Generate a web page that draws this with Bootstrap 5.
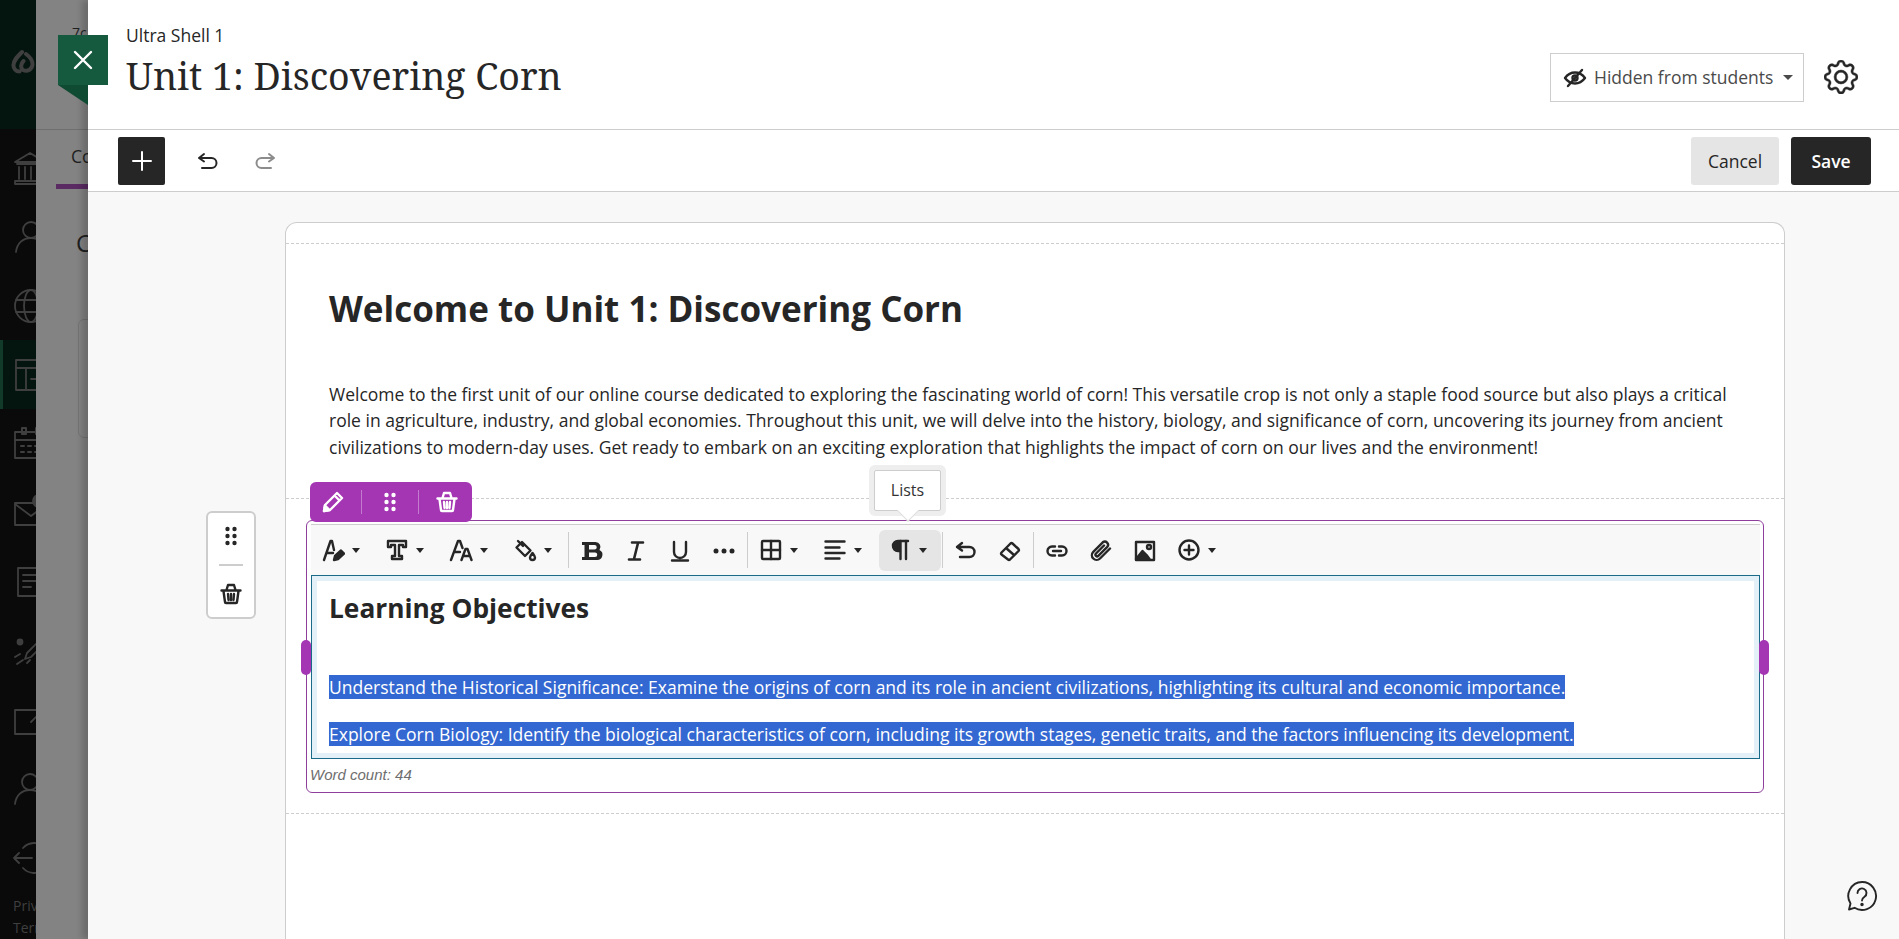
<!DOCTYPE html>
<html lang="en">
<head>
  <meta charset="UTF-8">
  <title>Unit 1: Discovering Corn</title>
  <link href="https://cdn.jsdelivr.net/npm/bootstrap@5.3.0/dist/css/bootstrap.min.css" rel="stylesheet">
  <style>
    html, body { height: 100%; }
    body { overflow: hidden; font-family: "Open Sans", "Noto Sans", sans-serif; color: #262626; background: #838383; }
    svg.ico { width: 24px; height: 24px; fill: none; stroke: currentColor; stroke-width: 2; stroke-linecap: round; stroke-linejoin: round; flex: none; }

    /* page behind the panel, dimmed */
    .base-page { height: 939px; }
    .side-nav { width: 36px; overflow: hidden; background: #0a0a0a; color: #3f3f3f; }
    .nav-top { height: 129px; background: #04140e; padding: 49px 0 0 11px; }
    .nav-top svg { width: 24px; height: 25px; display: block; }
    .nav-list { padding-top: 4px; }
    .nav-item-box { height: 69px; padding-left: 13px; }
    .nav-item-box svg.ico { width: 36px; height: 36px; stroke-width: 1.8; }
    .nav-item-box.is-on { background: #04140e; border-left: 3px solid #123a2a; padding-left: 10px; }
    .nav-legal { font-size: 14px; line-height: 22px; color: #3f3f3f; padding: 3px 0 0 13px; white-space: nowrap; }
    .base-main { flex: 1; color: #1f1f1f; min-width: 0; }
    .base-head { height: 130px; border-bottom: 1px solid #6f6f6f; padding: 22px 0 0 36px; font-size: 14px; }
    .base-tabs { height: 54px; padding: 13px 0 0 35px; font-size: 17.6px; }
    .base-tab-line { height: 5px; width: 100px; margin-left: 20px; background: #5a2a63; }
    .base-title { padding: 36px 0 0 40px; font-size: 24px; }
    .base-card { margin: 58px 0 0 42px; height: 119px; border: 1px solid #747474; border-radius: 6px; }

    /* panel */
    .peek-panel { position: absolute; top: 0; bottom: 0; left: 88px; right: 0; background: #f8f8f8; box-shadow: -6px 0 6px rgba(0,0,0,.18); overflow: hidden; }
    .close-flag { position: absolute; left: 58px; top: 35px; width: 50px; height: 70px; z-index: 5; padding: 0; border: 0; background: none; }
    .close-flag svg { display: block; }
    .panel-head { height: 130px; background: #fff; border-bottom: 1px solid #cdcdcd; padding: 22px 41px 0 38px; }
    .course-name { font-size: 17.5px; line-height: 26px; }
    .unit-title { font-family: "Noto Serif", "DejaVu Serif", "Liberation Serif", serif; font-size: 37.5px; line-height: 48px; font-weight: 400; margin: 4px 0 0; }
    .vis-btn { height: 49px; width: 254px; margin-top: 31px; border: 1px solid #cdcdcd; border-radius: 0; background: #fff; color: #4a4a4a; font-size: 17.5px; padding: 0 10px 0 12px; }
    .vis-btn svg.ico { color: #262626; margin-right: 7px; stroke-width: 2.400; }
    .gear-ico { width: 34px; height: 34px; margin: 38px 0 0 20px; fill: #262626; stroke: #262626; stroke-width: .25; }
    .panel-bar { height: 62px; background: #fff; border-bottom: 1px solid #cdcdcd; padding: 7px 28px 0 30px; }
    .add-btn { width: 47px; height: 48px; background: #262626; color: #fff; border-radius: 2px; padding: 0; border: 0; }
    .hist-btn { width: 24px; height: 24px; margin-left: 31px; padding: 0; border: 0; background: none; color: #262626; }
    .hist-btn.is-off { color: #8c8c8c; margin-left: 33px; }
    .act-btn { height: 48px; border: 0; border-radius: 3px; font-size: 17.5px; padding: 0 15px; }
    .act-cancel { width: 88px; background: #e5e5e5; color: #262626; margin-right: 12px; font-weight: 500; }
    .act-save { width: 80px; background: #262626; color: #fff; font-weight: 600; }

    .doc-sheet { margin: 30px 114px 0 197px; height: 800px; background: #fff; border: 1px solid #cdcdcd; border-bottom: 0; border-radius: 12px 12px 0 0; }
    .sheet-top { height: 21px; border-bottom: 1px dashed #cdcdcd; }
    .text-block { height: 255px; border-bottom: 1px dashed #cdcdcd; padding: 40px 43px 0; }
    .text-block h2 { font-size: 35px; line-height: 50px; font-weight: 700; margin: 0 0 47px; }
    .text-block p { font-size: 17.5px; line-height: 26.4px; margin: 0; }
    .edit-block { height: 315px; border-bottom: 1px dashed #cdcdcd; padding: 21px 20px 21px 20px; }
    .edit-frame { position: relative; height: 273px; border: 1px solid #8e3f9c; border-radius: 6px; padding: 3px 3px 0 4px; }
    .block-tools { position: absolute; left: 3px; top: -39px; width: 162px; height: 40px; background: #a435b3; color: #fff; border-radius: 6px; z-index: 2; gap: 16px; padding-left: 11px; }
    .block-tools svg.ico { stroke-width: 2.4; }
    .block-tools span { width: 1px; height: 24px; background: #c37ccd; }
    .block-tools button { background: none; border: 0; padding: 0; color: inherit; display: flex; }
    .side-grip { position: absolute; left: -101px; top: -10px; width: 50px; height: 108px; background: #fff; border: 2px solid #cdcdcd; border-radius: 6px; }
    .side-grip hr { width: 24px; margin: 16px 0; border-top: 2px solid #cdcdcd; opacity: 1; }
    .side-grip svg.ico { stroke-width: 2.4; }
    .size-knob { position: absolute; top: 119px; width: 10px; height: 35px; background: #a435b3; border-radius: 5px; }
    .knob-l { left: -6px; }
    .knob-r { right: -6px; }
    .rt-bar { height: 51px; background: #f8f8f8; border-top: 1px solid #cdcdcd; }
    .rt-btn { position: relative; height: 41px; border: 0; background: none; padding: 0; color: #262626; border-radius: 6px; }
    .rt-btn svg.ico { stroke-width: 2.4; }
    .rt-icon { width: 44px; }
    .rt-drop { width: 64px; padding-left: 10px; gap: 7px; }
    .rt-drop::after { content: ""; border-top: 5px solid #262626; border-left: 4px solid transparent; border-right: 4px solid transparent; }
    .rt-drop.is-hover { width: 62px; margin: 0 0 0 2px; background: #e5e5e5; padding-left: 9px; }
    .rt-sep { width: 1px; height: 36px; background: #cdcdcd; margin: 0 1px; }
    .lists-tip { position: absolute; left: -5px; top: -60px; width: 67px; height: 41px; background: #fff; border: 1px solid #cdcdcd; border-radius: 2px; box-shadow: 0 0 0 5px #eee; font-size: 16px; color: #333; z-index: 3; }
    .lists-tip::after { content: ""; position: absolute; left: 25px; bottom: -9px; width: 16px; height: 16px; background: #fff; border-right: 1px solid #ddd; border-bottom: 1px solid #ddd; transform: rotate(45deg) scale(.95); }
    .rt-body { height: 184px; border: 1px solid #1a6a8a; box-shadow: inset 0 0 0 5px #e3f0f8; padding: 14px 18px 0 17px; }
    .rt-body h3 { font-size: 26.3px; line-height: 36px; font-weight: 700; margin: 0 0 48px; }
    .rt-body p { font-size: 17.5px; line-height: 26px; margin: 0 0 21px; }
    .rt-body mark { background: #3367d1; color: #fff; padding: 0; }
    .word-total { font-family: "Liberation Sans", Arial, sans-serif; font-style: italic; font-size: 15px; color: #6e6e6e; padding: 6px 0 0 0; margin-left: -1px; line-height: 20px; }
    .help-ico { position: absolute; right: 21px; bottom: 27px; width: 32px; height: 32px; fill: none; stroke: #262626; stroke-width: 1.9; stroke-linejoin: round; stroke-linecap: round; }
  </style>
</head>
<body>
  <svg width="0" height="0" class="position-absolute">
    <defs>
      <symbol id="i-plus" viewBox="0 0 24 24"><path d="M12 3v18M3 12h18"/></symbol>
      <symbol id="i-undo" viewBox="0 0 24 24"><path d="M8 4 3 8l5 3.500M3 8h12.500a5 5 0 0 1 0 10H6"/></symbol>
      <symbol id="i-redo" viewBox="0 0 24 24"><path d="M16 4l5 4-5 3.500M21 8H8.500a5 5 0 0 0 0 10H18"/></symbol>
      <symbol id="i-eye" viewBox="0 0 24 24"><path d="M2 12c3-4 6.500-5.500 10-5.500s7 1.500 10 5.500c-3 4-6.500 5.500-10 5.500s-7-1.500-10-5.500z"/><circle cx="12" cy="12" r="2.500"/><path d="M5 20 19 4"/></symbol>
      <symbol id="i-pencil" viewBox="0 0 24 24"><path d="M16 3l5 5L9 20l-6 1 1-6zM13.500 5.500l5 5"/><path d="M4 15.500 3 21l5.500-1z" fill="currentColor"/></symbol>
      <symbol id="i-grip" viewBox="0 0 24 24"><g fill="currentColor" stroke="none"><circle cx="8.500" cy="5" r="2.200"/><circle cx="15.500" cy="5" r="2.200"/><circle cx="8.500" cy="12" r="2.200"/><circle cx="15.500" cy="12" r="2.200"/><circle cx="8.500" cy="19" r="2.200"/><circle cx="15.500" cy="19" r="2.200"/></g></symbol>
      <symbol id="i-trash" viewBox="0 0 24 24"><path d="M2.500 8.500h19M7.500 8l1.500-5h6l1.500 5M4.500 9l1.500 11a1 1 0 0 0 1 1h10a1 1 0 0 0 1-1l1.500-11M9 12l.5 6M12 12v6M15 12l-.5 6"/></symbol>
      <symbol id="i-fontcolor" viewBox="0 0 24 24"><path d="M3 22 9.500 3h1.500l2 9M6 15h6"/><path d="M13 22l1-4 6-5.500 3 3-6 5.500z" fill="currentColor"/></symbol>
      <symbol id="i-type" viewBox="0 0 24 24"><path d="M3 3h18v6h-3V7h-4v11h3v3H7v-3h3V7H6v2H3z"/></symbol>
      <symbol id="i-size" viewBox="0 0 24 24"><path d="M2 22 9 3h2l2.500 7M5 14h6M12.500 22l4-11h2l4 11M14 18h7"/></symbol>
      <symbol id="i-bucket" viewBox="0 0 24 24"><path d="M9 4l8.500 8.500-5.500 5.500-8.500-8.500zM5 3l5 5"/><path d="M19.500 15c1.500 2 2.500 3.200 2.500 4.500a2.500 2.500 0 0 1-5 0c0-1.300 1-2.500 2.500-4.500z"/></symbol>
      <symbol id="i-bold" viewBox="0 0 24 24"><path fill="currentColor" stroke="none" fill-rule="evenodd" d="M2 3h13.500a5 5 0 0 1 4 8 5.300 5.300 0 0 1-3 10H2v-3h2.500V6H2zM9 6v4.500h5.500a2.250 2.250 0 0 0 0-4.500zM9 13.500V18h6a2.250 2.250 0 0 0 0-4.500z"/></symbol>
      <symbol id="i-italic" viewBox="0 0 24 24"><path d="M8 3.500h11M5 20.500h11M14 4l-4 16" stroke-width="2.600"/></symbol>
      <symbol id="i-under" viewBox="0 0 24 24"><path d="M6 3v10a6 6 0 0 0 12 0V3M4 21.500h16"/></symbol>
      <symbol id="i-dots" viewBox="0 0 24 24"><g fill="currentColor" stroke="none"><circle cx="4" cy="12" r="2.500"/><circle cx="12" cy="12" r="2.500"/><circle cx="20" cy="12" r="2.500"/></g></symbol>
      <symbol id="i-table" viewBox="0 0 24 24"><rect x="3" y="3" width="18" height="18" rx="1"/><path d="M3 12h18M12 3v18"/></symbol>
      <symbol id="i-align" viewBox="0 0 24 24"><path d="M2.500 3.500h19M2.500 9.500h14M2.500 15h19M2.500 20.500h14"/></symbol>
      <symbol id="i-para" viewBox="0 0 24 24"><path d="M20 3H10a5 5 0 0 0 0 10h2" /><path d="M11 3.500H10a4.500 4.500 0 0 0 0 9h1z" fill="currentColor"/><path d="M12.500 3v18M18 3v18" stroke-width="2.400"/></symbol>
      <symbol id="i-eraser" viewBox="0 0 24 24"><path d="M3.500 13.500l9-9a1.500 1.500 0 0 1 2 0l6 5.500a1.500 1.500 0 0 1 0 2l-8.500 8.500a1.500 1.500 0 0 1-2 0l-6.500-5a1.500 1.500 0 0 1 0-2zM8 9l8 7"/></symbol>
      <symbol id="i-link" viewBox="0 0 24 24"><path d="M10 7.500H7a4.500 4.500 0 0 0 0 9h3M14 7.500h3a4.500 4.500 0 0 1 0 9h-3M8 12h8"/></symbol>
      <symbol id="i-clip" viewBox="0 0 24 24"><path d="M21 9.500 11 19.500a4.700 4.700 0 0 1-6.700-6.700l9.500-9.500a3.200 3.200 0 0 1 4.500 4.500l-9 9a1.600 1.600 0 0 1-2.300-2.300l8-8"/></symbol>
      <symbol id="i-image" viewBox="0 0 24 24"><rect x="3" y="3" width="18" height="18"/><circle cx="16" cy="8" r="2"/><path d="M3 20l6.500-8 4 4 3 4z" fill="currentColor"/></symbol>
      <symbol id="i-addcircle" viewBox="0 0 24 24"><circle cx="12" cy="12" r="9.500"/><path d="M12 7.500v9M7.500 12h9"/></symbol>
    </defs>
  </svg>

  <div class="base-page d-flex">
    <nav class="side-nav flex-shrink-0">
      <div class="nav-top">
        <svg viewBox="0 0 24 25" fill="none" stroke="currentColor" stroke-width="4" stroke-linecap="round"><path d="M11 3C5 9 2.500 12 2.500 16a6 6 0 0 0 6 6.500M15 5c4 3 6.500 6 6.500 10a6.500 6.500 0 0 1-9.500 6c-3-2-2-6.500.5-9"/></svg>
      </div>
      <div class="nav-list">
        <div class="nav-item-box d-flex align-items-center"><svg class="ico" viewBox="0 0 36 36"><path d="M2 12 17 3l15 9zM4 14h28M6 17v12M12 17v12M18 17v12M24 17v12M30 17v12M2 31h30v3H2z"/></svg></div>
        <div class="nav-item-box d-flex align-items-center"><svg class="ico" viewBox="0 0 36 36"><circle cx="18" cy="11" r="8"/><path d="M3 33c1-9 7-14 15-14s14 5 15 14"/></svg></div>
        <div class="nav-item-box d-flex align-items-center"><svg class="ico" viewBox="0 0 36 36"><circle cx="18" cy="18" r="16"/><ellipse cx="18" cy="18" rx="7" ry="16"/><path d="M3 12h30M3 24h30"/></svg></div>
        <div class="nav-item-box is-on d-flex align-items-center"><svg class="ico" viewBox="0 0 36 36"><rect x="3" y="3" width="32" height="30"/><path d="M3 11h32M13 11v22M18 22h10"/></svg></div>
        <div class="nav-item-box d-flex align-items-center"><svg class="ico" viewBox="0 0 36 36"><rect x="2" y="6" width="32" height="26"/><path d="M2 14h32M9 2h4v6H9zM23 2h4v6h-4zM8 20h3M15 20h3M22 20h3M8 26h3M15 26h3M22 26h3" stroke-width="2"/></svg></div>
        <div class="nav-item-box d-flex align-items-center"><svg class="ico" viewBox="0 0 36 36"><rect x="2" y="8" width="32" height="22"/><path d="M2 9l16 12 16-12"/><circle cx="26" cy="6" r="6" fill="currentColor"/></svg></div>
        <div class="nav-item-box d-flex align-items-center"><svg class="ico" viewBox="0 0 36 36"><path d="M5 4h26v28H5zM10 11h18M10 17h14M10 23h8"/></svg></div>
        <div class="nav-item-box d-flex align-items-center"><svg class="ico" viewBox="0 0 36 36"><path d="M14 20 30 4l4 4-16 16-6 2zM2 24l5-3M4 31l6-4M14 30l3-3"/><circle cx="7" cy="9" r="2.500" fill="currentColor"/></svg></div>
        <div class="nav-item-box d-flex align-items-center"><svg class="ico" viewBox="0 0 36 36"><path d="M30 8H2v24h28V18M18 20l14-14"/></svg></div>
        <div class="nav-item-box d-flex align-items-center"><svg class="ico" viewBox="0 0 36 36"><circle cx="17" cy="11" r="8"/><path d="M2 33c1-9 7-14 15-14s14 5 15 14"/></svg></div>
        <div class="nav-item-box d-flex align-items-center"><svg class="ico" viewBox="0 0 36 36"><path d="M10 8a15 15 0 1 1 0 20M1 18h18M6 13l-5 5 5 5"/></svg></div>
        <div class="nav-legal">Privacy<br>Terms</div>
      </div>
    </nav>
    <main class="base-main">
      <div class="base-head">7c</div>
      <div class="base-tabs">Course</div>
      <div class="base-tab-line"></div>
      <div class="base-title">Course</div>
      <div class="base-card"></div>
    </main>
  </div>

  <button class="close-flag" type="button" aria-label="Close">
    <svg width="50" height="70" viewBox="0 0 50 70"><path d="M0 50l30 20V50z" fill="#0f4a33"/><rect width="50" height="50" fill="#155a3f"/><path d="M17 17l16 16M33 17 17 33" stroke="#fff" stroke-width="2.400" stroke-linecap="round"/></svg>
  </button>

  <section class="peek-panel d-flex flex-column">
    <header class="panel-head d-flex justify-content-between flex-shrink-0">
      <div>
        <div class="course-name">Ultra Shell 1</div>
        <h1 class="unit-title">Unit 1: Discovering Corn</h1>
      </div>
      <div class="d-flex align-items-start">
        <button class="btn vis-btn dropdown-toggle d-flex align-items-center justify-content-between" type="button">
          <svg class="ico"><use href="#i-eye"/></svg><span class="me-auto">Hidden from students</span>
        </button>
        <svg class="gear-ico" viewBox="0 0 16 16"><path d="M8 4.754a3.246 3.246 0 1 0 0 6.492 3.246 3.246 0 0 0 0-6.492zM5.754 8a2.246 2.246 0 1 1 4.492 0 2.246 2.246 0 0 1-4.492 0z"/><path d="M9.796 1.343c-.527-1.790-3.065-1.790-3.592 0l-.094.319a.873.873 0 0 1-1.255.52l-.292-.16c-1.640-.892-3.433.902-2.540 2.541l.159.292a.873.873 0 0 1-.52 1.255l-.319.094c-1.790.527-1.790 3.065 0 3.592l.319.094a.873.873 0 0 1 .52 1.255l-.16.292c-.892 1.640.901 3.434 2.541 2.540l.292-.159a.873.873 0 0 1 1.255.52l.094.319c.527 1.790 3.065 1.790 3.592 0l.094-.319a.873.873 0 0 1 1.255-.52l.292.16c1.640.893 3.434-.902 2.540-2.541l-.159-.292a.873.873 0 0 1 .52-1.255l.319-.094c1.790-.527 1.790-3.065 0-3.592l-.319-.094a.873.873 0 0 1-.52-1.255l.16-.292c.893-1.640-.902-3.433-2.541-2.540l-.292.159a.873.873 0 0 1-1.255-.52l-.094-.319zm-2.633.283c.246-.835 1.428-.835 1.674 0l.094.319a1.873 1.873 0 0 0 2.693 1.115l.291-.16c.764-.415 1.600.42 1.184 1.185l-.159.292a1.873 1.873 0 0 0 1.116 2.692l.318.094c.835.246.835 1.428 0 1.674l-.319.094a1.873 1.873 0 0 0-1.115 2.693l.16.291c.415.764-.42 1.600-1.185 1.184l-.291-.159a1.873 1.873 0 0 0-2.693 1.116l-.094.318c-.246.835-1.428.835-1.674 0l-.094-.319a1.873 1.873 0 0 0-2.692-1.115l-.292.16c-.764.415-1.600-.42-1.184-1.185l.159-.291A1.873 1.873 0 0 0 1.945 8.930l-.319-.094c-.835-.246-.835-1.428 0-1.674l.319-.094A1.873 1.873 0 0 0 3.060 4.377l-.16-.292c-.415-.764.42-1.600 1.185-1.184l.292.159a1.873 1.873 0 0 0 2.692-1.115l.094-.319z"/></svg>
      </div>
    </header>

    <div class="panel-bar d-flex align-items-start flex-shrink-0">
      <button class="add-btn d-flex align-items-center justify-content-center" type="button"><svg class="ico"><use href="#i-plus"/></svg></button>
      <button class="hist-btn align-self-center mb-2" type="button"><svg class="ico"><use href="#i-undo"/></svg></button>
      <button class="hist-btn is-off align-self-center mb-2" type="button"><svg class="ico"><use href="#i-redo"/></svg></button>
      <button class="act-btn act-cancel ms-auto" type="button">Cancel</button>
      <button class="act-btn act-save" type="button">Save</button>
    </div>

    <div class="doc-sheet flex-shrink-0">
      <div class="sheet-top"></div>
      <div class="text-block">
        <h2>Welcome to Unit 1: Discovering Corn</h2>
        <p>Welcome to the first unit of our online course dedicated to exploring the fascinating world of corn! This versatile crop is not only a staple food source but also plays a critical role in agriculture, industry, and global economies. Throughout this unit, we will delve into the history, biology, and significance of corn, uncovering its journey from ancient civilizations to modern-day uses. Get ready to embark on an exciting exploration that highlights the impact of corn on our lives and the environment!</p>
      </div>
      <div class="edit-block">
        <div class="edit-frame">
          <div class="block-tools d-flex align-items-center">
            <button type="button"><svg class="ico"><use href="#i-pencil"/></svg></button><span></span>
            <button type="button"><svg class="ico"><use href="#i-grip"/></svg></button><span></span>
            <button type="button"><svg class="ico"><use href="#i-trash"/></svg></button>
          </div>
          <div class="side-grip d-flex flex-column align-items-center justify-content-center">
            <svg class="ico"><use href="#i-grip"/></svg>
            <hr>
            <svg class="ico"><use href="#i-trash"/></svg>
          </div>
          <div class="size-knob knob-l"></div>
          <div class="size-knob knob-r"></div>

          <div class="rt-bar d-flex align-items-center">
            <button class="rt-btn rt-drop d-flex align-items-center" type="button"><svg class="ico"><use href="#i-fontcolor"/></svg></button>
            <button class="rt-btn rt-drop d-flex align-items-center" type="button"><svg class="ico"><use href="#i-type"/></svg></button>
            <button class="rt-btn rt-drop d-flex align-items-center" type="button"><svg class="ico"><use href="#i-size"/></svg></button>
            <button class="rt-btn rt-drop d-flex align-items-center" type="button"><svg class="ico"><use href="#i-bucket"/></svg></button>
            <div class="rt-sep"></div>
            <button class="rt-btn rt-icon" type="button"><svg class="ico"><use href="#i-bold"/></svg></button>
            <button class="rt-btn rt-icon" type="button"><svg class="ico"><use href="#i-italic"/></svg></button>
            <button class="rt-btn rt-icon" type="button"><svg class="ico"><use href="#i-under"/></svg></button>
            <button class="rt-btn rt-icon" type="button"><svg class="ico"><use href="#i-dots"/></svg></button>
            <div class="rt-sep"></div>
            <button class="rt-btn rt-drop d-flex align-items-center" type="button"><svg class="ico"><use href="#i-table"/></svg></button>
            <button class="rt-btn rt-drop d-flex align-items-center" type="button"><svg class="ico"><use href="#i-align"/></svg></button>
            <button class="rt-btn rt-drop is-hover d-flex align-items-center" type="button"><svg class="ico"><use href="#i-para"/></svg>
              <span class="lists-tip d-flex align-items-center justify-content-center">Lists</span>
            </button>
            <div class="rt-sep"></div>
            <button class="rt-btn rt-icon" type="button"><svg class="ico"><use href="#i-undo"/></svg></button>
            <button class="rt-btn rt-icon" type="button"><svg class="ico"><use href="#i-eraser"/></svg></button>
            <div class="rt-sep"></div>
            <button class="rt-btn rt-icon" type="button"><svg class="ico"><use href="#i-link"/></svg></button>
            <button class="rt-btn rt-icon" type="button"><svg class="ico"><use href="#i-clip"/></svg></button>
            <button class="rt-btn rt-icon" type="button"><svg class="ico"><use href="#i-image"/></svg></button>
            <button class="rt-btn rt-drop d-flex align-items-center" type="button"><svg class="ico"><use href="#i-addcircle"/></svg></button>
          </div>
          <div class="rt-body">
            <h3>Learning Objectives</h3>
            <p><mark>Understand the Historical Significance: Examine the origins of corn and its role in ancient civilizations, highlighting its cultural and economic importance.</mark></p>
            <p><mark>Explore Corn Biology: Identify the biological characteristics of corn, including its growth stages, genetic traits, and the factors influencing its development.</mark></p>
          </div>
          <div class="word-total">Word count: 44</div>
        </div>
      </div>
    </div>

    <svg class="help-ico" viewBox="0 0 32 32"><path d="M16 2a14 14 0 1 1-7.500 25.800L3 29.500l1.500-6A14 14 0 0 1 16 2z"/><path d="M11.500 13a4.500 4.500 0 1 1 7 3.700c-1.500 1-2.500 1.800-2.500 3.800"/><circle cx="16" cy="24.500" r=".8" fill="#262626"/></svg>
  </section>

  <script src="https://cdn.jsdelivr.net/npm/bootstrap@5.3.0/dist/js/bootstrap.bundle.min.js"></script>
</body>
</html>
